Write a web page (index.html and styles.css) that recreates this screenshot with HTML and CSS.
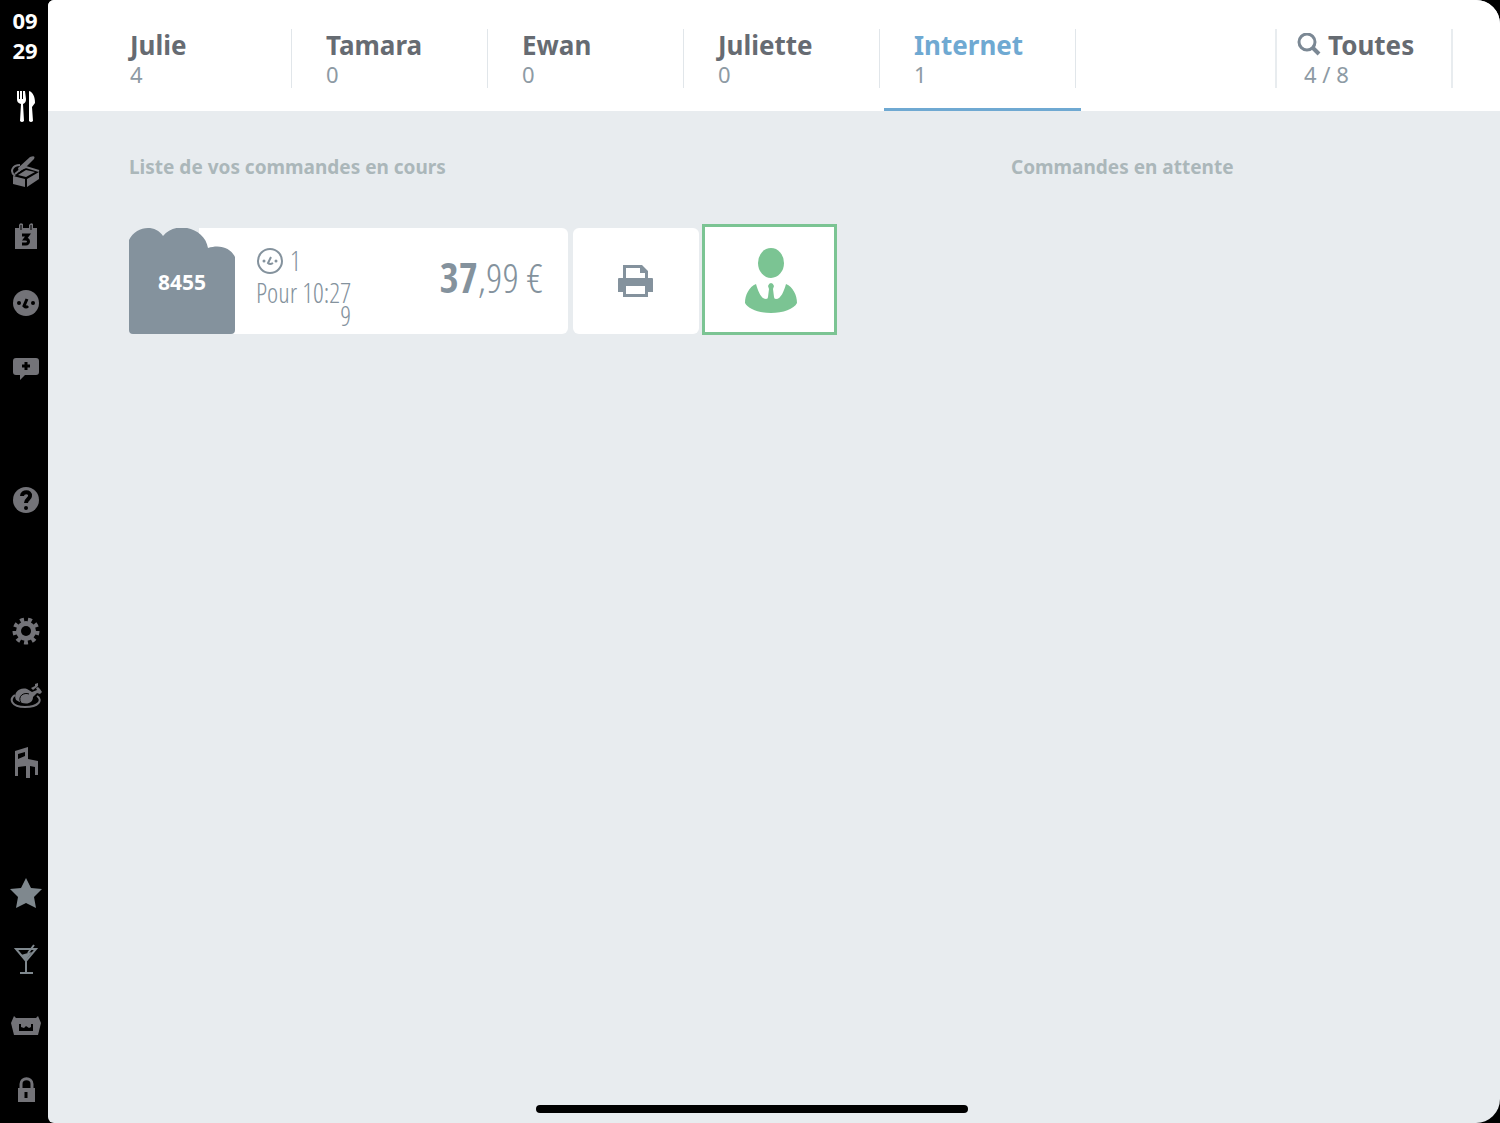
FILE: index.html
```
<!DOCTYPE html>
<html lang="fr">

<head>
    <meta charset="UTF-8">
    <meta name="viewport" content="width=device-width, initial-scale=1.0">
    <title>Commandes en cours</title>

    <link rel="stylesheet" href="styles.css">
</head>

<body>

    <aside class="sidebar">
        <time class="clock" datetime="09:29"><span>09</span><span>29</span></time>
        <nav class="menu">
            <button type="button" class="menu-item active" aria-label="Salle">
                <svg viewBox="0 0 32 32">
                    <path d="M7 1h2v8h1V1h2v8h1V1h2l1 8c0 3-1 4-3 5l1 17q-2 2-4 0l1-17c-3-1-4-2-4-5zM19 31V1c4 1 6 6 6 12l-3 4 1 14q-2 2-4 0z" />
                </svg>
            </button>
            <button type="button" class="menu-item" aria-label="Emporter">
                <svg viewBox="0 0 32 32">
                    <path d="M8 13L20 2q6-2 4 2L16 12l-7 5zM3 21l12 3v8L3 29zM17 24l12-7v7l-12 8zM8 20l8-5 9 2-9 5z" />
                    <path class="line" d="M5 21C-1 16 3 10 10 10M5 19l6-5 5-2 13 4" />
                </svg>
            </button>
            <button type="button" class="menu-item" aria-label="Réservations">
                <svg viewBox="0 0 32 32">
                    <path d="M5 7h4V4q1-3 4-1v4h6V4q2-3 4-1v4h4v21H5z" />
                    <path class="gap" d="M11 4v5M21 4v5" />
                    <path class="cut" d="M12 14h6l-3 4c5 0 4 5 1 5h-4" />
                </svg>
            </button>
            <button type="button" class="menu-item" aria-label="Clients">
                <svg viewBox="0 0 32 32">
                    <circle cx="16" cy="16" r="13" />
                    <circle class="hole" cx="9" cy="16" r="2" />
                    <circle class="hole" cx="23" cy="16" r="2" />
                    <path class="cut" d="M17 12l-3 7q2 2 4 0" />
                </svg>
            </button>
            <button type="button" class="menu-item" aria-label="Messages">
                <svg viewBox="0 0 32 32">
                    <path d="M6 6h20q3 0 3 3v11q0 3-3 3H15l-5 5v-5H6q-3 0-3-3V9q0-3 3-3z" />
                    <path class="cut" d="M16 10v8M12 14h8" />
                </svg>
            </button>
            <span></span>
            <button type="button" class="menu-item" aria-label="Aide">
                <svg viewBox="0 0 32 32">
                    <circle cx="16" cy="16" r="13" />
                    <path class="cut thick" d="M12 12c0-5 9-5 8 0 0 3-4 3-4 7" />
                    <circle class="hole" cx="16" cy="24" r="2" />
                </svg>
            </button>
            <span></span>
            <button type="button" class="menu-item" aria-label="Réglages">
                <svg viewBox="0 0 32 32">
                    <circle class="teeth" cx="16" cy="16" r="11" pathLength="90" />
                    <circle cx="16" cy="16" r="10" />
                    <circle class="hole" cx="16" cy="16" r="5" />
                </svg>
            </button>
            <button type="button" class="menu-item" aria-label="Plats">
                <svg viewBox="0 0 32 32">
                    <path class="line" d="M5 15c-6 4-4 12 10 12s18-7 12-11" />
                    <path d="M6 20c-3-7 3-13 11-11l5 3 5-2-1-2 2-1 2 2 2 3-2 2-3-1-4 4c0 7-8 9-17 3zM21 8l4-2V4l3-1v3l-5 4z" />
                    <path class="gap" d="M11 23c-4-7 3-11 8-9" />
                </svg>
            </button>
            <button type="button" class="menu-item" aria-label="Tables">
                <svg viewBox="0 0 32 32">
                    <path d="M5 5l13-4v12l10 2v14h-3v-8l-5-1v12h-4V20l-8 1v9H5zM8 8v5l7-3V6z" />
                </svg>
            </button>
            <span></span>
            <button type="button" class="menu-item" aria-label="Favoris">
                <svg class="pale" viewBox="0 0 32 32">
                    <path d="M16 1l5 10 11 1-8 8 2 11-10-5-10 5 2-11-8-8 11-1z" />
                </svg>
            </button>
            <button type="button" class="menu-item" aria-label="Boissons">
                <svg class="pale" viewBox="0 0 32 32">
                    <path class="line" d="M6 6h20L16 18zM16 18v11M10 30h13M18 10l6-8" />
                    <path d="M11 12l7-2 4-1-6 8z" />
                </svg>
            </button>
            <button type="button" class="menu-item" aria-label="Caisse">
                <svg viewBox="0 0 32 32">
                    <path d="M1 14l3-7 2 2h20l2-2 3 7-3 12H4z" />
                    <path class="hole" d="M9 15h2v3l3 1 2-2 3 2 2-1v-3h2v7H9z" />
                </svg>
            </button>
            <button type="button" class="menu-item" aria-label="Verrouiller">
                <svg viewBox="0 0 32 32">
                    <path class="arch" d="M11 15v-5c0-7 11-7 11 0v5" />
                    <path d="M8 14h17v14H8z" />
                    <path class="cut" d="M16 18v6" />
                </svg>
            </button>
        </nav>
    </aside>

    <main class="main">
        <header class="tabs">
            <button type="button" class="tab"><strong>Julie</strong><span>4</span></button>
            <button type="button" class="tab"><strong>Tamara</strong><span>0</span></button>
            <button type="button" class="tab"><strong>Ewan</strong><span>0</span></button>
            <button type="button" class="tab"><strong>Juliette</strong><span>0</span></button>
            <button type="button" class="tab selected"><strong>Internet</strong><span>1</span></button>
            <button type="button" class="tab all">
                <strong>
                    <svg viewBox="0 0 24 24">
                        <circle cx="10" cy="9" r="8" />
                        <path class="handle" d="M16 15l6 6" />
                    </svg>Toutes
                </strong>
                <span>4 / 8</span>
            </button>
        </header>

        <div class="content">
            <section class="current">
                <h2>Liste de vos commandes en cours</h2>
                <div class="orders">
                    <article class="order">
                        <div class="number">
                            <svg viewBox="0 0 106 106">
                                <path d="M0 12C7-2 26-4 34 8 47-8 76 0 79 20c12-4 23 0 27 9v73q0 4-4 4H4q-4 0-4-4z" />
                            </svg>
                            <b>8455</b>
                        </div>
                        <div class="details">
                            <p class="guests">
                                <svg viewBox="0 0 28 28">
                                    <circle class="ring" cx="14" cy="14" r="12" />
                                    <circle cx="8" cy="14" r="1.5" />
                                    <circle cx="20" cy="14" r="1.5" />
                                    <path class="ring" d="M15 10l-3 6q2 2 5 0" />
                                </svg>1
                            </p>
                            <p>Pour 10:27</p>
                            <p class="table-number">9</p>
                        </div>
                        <p class="price"><b>37</b>,99 €</p>
                    </article>
                    <button type="button" class="action" aria-label="Imprimer">
                        <svg class="printer" viewBox="0 0 36 32">
                            <path d="M5 0h19l6 6v7h4q1 0 1 1v13h-5v5H5v-5H0V14q0-1 1-1h4zM8 3v10h19V8h-5V3zM8 21v8h19v-8z" />
                        </svg>
                    </button>
                    <button type="button" class="action client" aria-label="Client">
                        <svg class="person" viewBox="0 0 52 65">
                            <ellipse cx="26" cy="15" rx="13" ry="15" />
                            <path d="M11 36C4 39 0 47 0 55c3 6 14 10 26 10s23-4 26-10c0-8-4-16-11-19-2 7-5 15-10 15q-2 0-2-2l-1-8 1-3q-1-3-3-3t-3 3l1 3-1 8q0 2-2 2c-5 0-8-8-10-15z" />
                        </svg>
                    </button>
                </div>
            </section>
            <section class="waiting">
                <h2>Commandes en attente</h2>
            </section>
        </div>
        <div class="home-bar"></div>
    </main>

</body>

</html>
```
FILE: styles.css
```
* {
    box-sizing: border-box;
}

body {
    display: flex;
    min-height: 100vh;
    margin: 0;
    background: #000;
    color: #84929d;
    font-family: "Noto Sans", "Open Sans", sans-serif;
}

button {
    padding: 0;
    border: 0;
    background: none;
    color: inherit;
    font: inherit;
    cursor: pointer;
}

h2,
p {
    margin: 0;
}

svg {
    display: block;
    fill: currentColor;
}

/* sidebar */
.sidebar {
    display: flex;
    flex-direction: column;
    width: 48px;
}

.clock {
    display: flex;
    flex-direction: column;
    height: 73px;
    padding: 5px 0 0 2px;
    color: #fff;
    font-size: 22px;
    font-weight: bold;
    line-height: 30px;
    text-align: center;
}

.menu {
    display: grid;
    flex: 1;
    grid-template-rows: repeat(16, 1fr);
}

.menu-item {
    display: flex;
    align-items: center;
    justify-content: center;
    padding-left: 3px;
    color: #737378;
}

.menu-item.active {
    color: #fff;
}

.menu-item svg {
    width: 32px;
    height: 32px;
}

.menu-item .pale {
    color: #7f888e;
}

.line {
    fill: none;
    stroke: currentColor;
    stroke-width: 2;
}

.arch {
    fill: none;
    stroke: currentColor;
    stroke-width: 3;
}

.cut {
    fill: none;
    stroke: #000;
    stroke-width: 3;
}

.gap {
    fill: none;
    stroke: #000;
    stroke-width: 1;
}

.thick {
    stroke-width: 4;
}

.hole {
    fill: #000;
}

.teeth {
    fill: none;
    stroke: currentColor;
    stroke-width: 5;
    stroke-dasharray: 5 5;
}

/* main */
.main {
    position: relative;
    flex: 1;
    overflow: hidden;
    background: #e8ecef;
    border-radius: 6px 24px 24px 6px;
}

.tabs {
    display: flex;
    height: 111px;
    padding: 29px 47px 23px 48px;
    background: #fff;
}

.tab {
    position: relative;
    flex: 0 1 196px;
    padding-left: 34px;
    border-right: 1px solid #e1e6ea;
    text-align: left;
}

.tab strong {
    display: flex;
    align-items: center;
    color: #666b72;
    font-size: 26px;
    line-height: 32px;
}

.tab span {
    display: block;
    color: #8d9aa4;
    font-size: 22px;
    line-height: 27px;
}

.tab.selected strong {
    color: #6fa9d2;
}

.tab.selected::after {
    position: absolute;
    right: -6px;
    bottom: -23px;
    left: 4px;
    height: 3px;
    background: #6fa9d2;
    content: "";
}

.tab.all {
    flex-basis: 178px;
    margin-left: auto;
    padding-left: 20px;
    border-right: 2px solid #e8ecef;
    border-left: 2px solid #e8ecef;
}

.all svg {
    width: 24px;
    height: 24px;
    margin-right: 7px;
    fill: none;
    stroke: #7b8894;
    stroke-width: 3;
}

.all .handle {
    stroke-width: 4;
}

.all span {
    padding-left: 7px;
}

.content {
    display: grid;
    grid-template-columns: 882fr 408fr;
    padding: 42px 81px 0;
}

h2 {
    color: #abb7ba;
    font-size: 19px;
    line-height: 28px;
}

.orders {
    display: flex;
    align-items: flex-end;
    margin-top: 43px;
}

.order {
    display: flex;
    flex: 0 1 439px;
    height: 106px;
    margin: 0 5px 1px 0;
    background: linear-gradient(90deg, transparent 70px, #fff 70px);
    border-radius: 6px;
}

.number {
    display: grid;
    width: 106px;
}

.number svg,
.number b {
    grid-area: 1 / 1;
    width: 106px;
}

.number svg {
    height: 106px;
}

.number b {
    z-index: 1;
    align-self: center;
    padding-top: 2px;
    color: #fff;
    font-size: 21px;
    line-height: 28px;
    text-align: center;
}

.details,
.price {
    font-family: "Open Sans Condensed Light", "Open Sans Condensed", "Liberation Sans Narrow", sans-serif;
    font-weight: 300;
}

.details {
    padding: 17px 0 0 21px;
    font-size: 27px;
    line-height: 32px;
}

.guests {
    display: flex;
    align-items: center;
}

.guests svg {
    width: 28px;
    height: 28px;
    margin-right: 6px;
}

.ring {
    fill: none;
    stroke: currentColor;
    stroke-width: 2;
}

.table-number {
    line-height: 14px;
    text-align: right;
}

.price {
    margin-left: auto;
    padding-right: 25px;
    font-size: 41px;
    line-height: 98px;
}

.price b {
    font-family: "Open Sans Condensed", "Liberation Sans Narrow", sans-serif;
}

.action {
    display: flex;
    flex: 0 1 126px;
    align-items: center;
    justify-content: center;
    height: 106px;
    margin-bottom: 1px;
    background: #fff;
    border-radius: 6px;
}

.printer {
    width: 36px;
    height: 32px;
}

.client {
    flex-basis: 135px;
    height: 111px;
    margin: 0 0 0 3px;
    padding: 2px 0 0 2px;
    border: 3px solid #7bc493;
    border-radius: 0;
    color: #7bc493;
}

.person {
    width: 52px;
    height: 65px;
}

.home-bar {
    position: absolute;
    bottom: 10px;
    left: 50%;
    width: 432px;
    height: 8px;
    margin-left: -238px;
    background: #000;
    border-radius: 4px;
}
```
